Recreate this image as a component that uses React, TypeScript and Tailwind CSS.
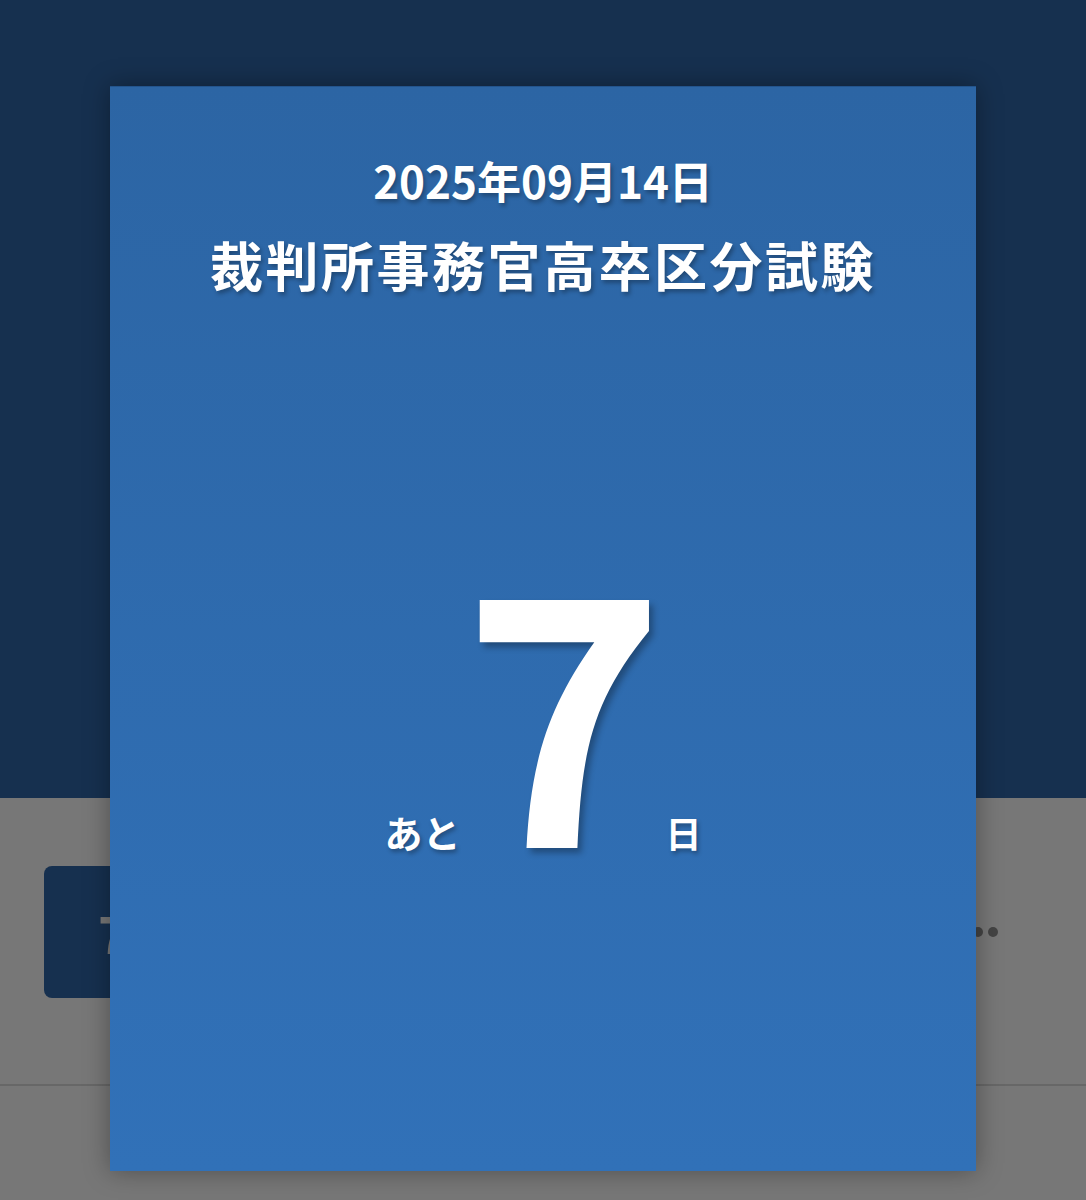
import React from 'react';

const jp = { fontFamily: '"Noto Sans CJK JP", "Noto Sans", sans-serif' };

export default function App() {
  return (
    <div className="relative h-[1200px] w-full overflow-hidden bg-[#777777]" style={jp}>
      {/* background page (dimmed) */}
      <div className="h-[798px] bg-[#16304f]" />
      <div className="px-[44px] pt-[68px]">
        <div className="flex items-center justify-between">
          <div className="flex h-[132px] w-[560px] items-center rounded-lg bg-[#16304f] pl-[54px]">
            <span className="text-[52px] font-bold leading-none text-[#777777]">7</span>
          </div>
          <div className="mr-[44px] flex gap-[5px]">
            <span className="h-[10px] w-[10px] rounded-full bg-[#444444]" />
            <span className="h-[10px] w-[10px] rounded-full bg-[#444444]" />
            <span className="h-[10px] w-[10px] rounded-full bg-[#444444]" />
          </div>
        </div>
      </div>
      <div className="mt-[86px] h-[2px] bg-[#676767]" />

      {/* modal */}
      <div className="absolute inset-0 flex justify-center pt-[86px]">
        <div className="flex h-[1085px] w-[866px] flex-col items-center border-t border-[#23548c] bg-gradient-to-b from-[#2c65a4] to-[#3171b8] text-white shadow-[0_0_24px_rgba(0,0,0,0.35)]">
          <div className="mt-[65px] text-[44px] font-bold leading-[56px] [text-shadow:2px_3px_4px_rgba(0,0,0,0.3)]">
            2025年09月14日
          </div>
          <div className="mt-[24px] text-[53px] font-bold leading-[64px] tracking-[2.5px] [text-shadow:2px_3px_4px_rgba(0,0,0,0.3)]">
            裁判所事務官高卒区分試験
          </div>
          <div className="mt-[230px] flex items-baseline">
            <span className="text-[38px] font-bold [text-shadow:2px_3px_4px_rgba(0,0,0,0.3)]">あと</span>
            <span className="ml-[2px] mr-[0px] text-[344px] font-bold leading-[344px] [text-shadow:4px_5px_6px_rgba(0,0,0,0.3)]">7</span>
            <span className="text-[36px] font-bold [text-shadow:2px_3px_4px_rgba(0,0,0,0.3)]">日</span>
          </div>
        </div>
      </div>
    </div>
  );
}
